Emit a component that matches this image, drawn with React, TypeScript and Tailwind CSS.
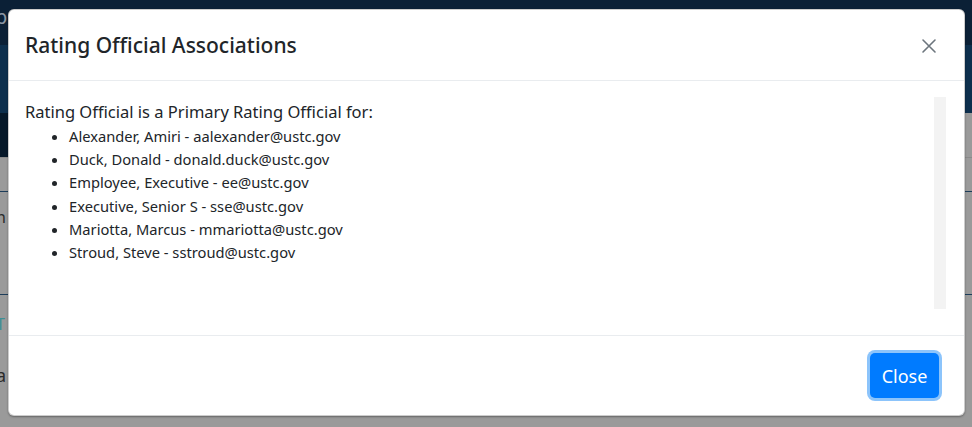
import React from "react";

const people = [
  "Alexander, Amiri - aalexander@ustc.gov",
  "Duck, Donald - donald.duck@ustc.gov",
  "Employee, Executive - ee@ustc.gov",
  "Executive, Senior S - sse@ustc.gov",
  "Mariotta, Marcus - mmariotta@ustc.gov",
  "Stroud, Steve - sstroud@ustc.gov",
];

export default function App() {
  const font = { fontFamily: '"Noto Sans", "Open Sans", sans-serif' };
  return (
    <div className="relative w-[972px] h-[427px] overflow-hidden bg-[#9a9a9a]" style={font}>
      {/* page behind the backdrop */}
      <div className="flex flex-col">
        <div className="h-[45px] bg-[#0b2036] text-[#8a96a4] text-[20px] leading-[34px] -ml-[5px]">p</div>
        <div className="h-[68px] bg-[#0d2f4d]" />
        <div className="h-[45px] flex border-b border-[#8a8a8a]">
          <div className="w-[20px] bg-[#061829]" />
          <div className="flex-1" />
        </div>
        <div className="h-[34px] border-b border-[#1d3d5a]" />
        <div className="h-[103px] border-b border-[#1d3d5a] text-[#2a2a2a] text-[16px] leading-[50px] -ml-[4px]">n</div>
        <div className="h-[50px] text-[#3d8f95] text-[16px] leading-[58px] -ml-[4px]">T</div>
        <div className="h-[80px] text-[#2a2a2a] text-[18px] leading-[60px] -ml-[4px]">a</div>
      </div>

      {/* modal */}
      <div className="absolute left-[8px] top-[9px] w-[957px] h-[407px] bg-white rounded-[6px] border border-black/20 shadow-[0_1px_2px_rgba(0,0,0,0.35)] flex flex-col text-[#212529]">
        <div className="h-[71px] shrink-0 flex items-center justify-between pl-[16px] pr-[27px] border-b border-[#e9ecef]">
          <h5 className="text-[21px] font-medium leading-[30px]">Rating Official Associations</h5>
          <svg width="16" height="16" viewBox="0 0 16 16" className="mt-[1px]">
            <path d="M2 2 L14 14 M14 2 L2 14" stroke="#6c757d" strokeWidth="1.6" strokeLinecap="round" />
          </svg>
        </div>
        <div className="h-[255px] shrink-0 pt-[16px] pl-[16px] pr-[18px] border-b border-[#e9ecef]">
          <div className="h-[212px] flex">
            <div className="flex-1">
              <p className="text-[16.5px] leading-[24px] mt-[3px]">Rating Official is a Primary Rating Official for:</p>
              <ul className="list-disc pl-[44px] text-[14.7px] leading-[23.2px] mt-[1px]">
                {people.map((p) => (
                  <li key={p}>{p}</li>
                ))}
              </ul>
            </div>
            <div className="w-[12px] bg-[#f3f3f3]" />
          </div>
        </div>
        <div className="flex-1 flex items-center justify-end pr-[25px]">
          <button className="w-[69px] h-[45px] bg-[#007bff] text-white text-[18px] leading-[30px] rounded-[5px] ring-[3px] ring-[#8cc4fb]">
            Close
          </button>
        </div>
      </div>
    </div>
  );
}
